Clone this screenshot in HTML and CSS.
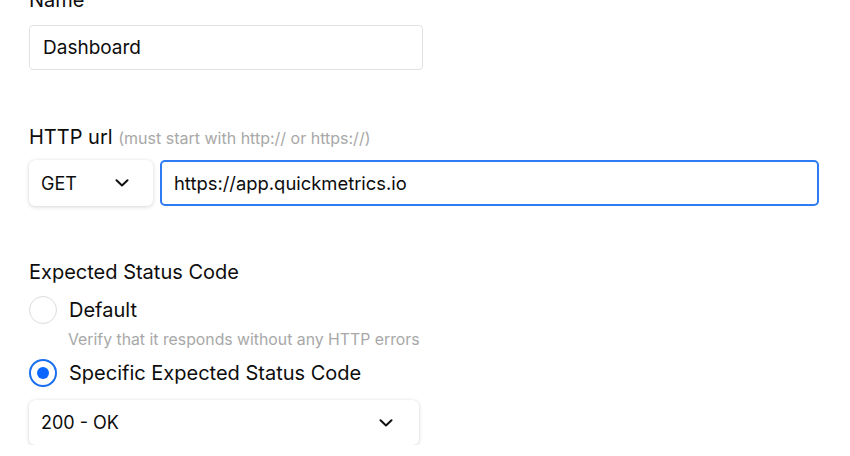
FILE: index.html
```html
<!DOCTYPE html>
<html>
<head>
<meta charset="utf-8">
<link rel="stylesheet" href="styles.css">
</head>
<body>
<div class="form">
  <div class="field">
    <label class="label">Name</label>
    <div class="input name-input">Dashboard</div>
  </div>

  <div class="field field-url">
    <label class="label">HTTP url <span class="hint">(must start with http:// or https://)</span></label>
    <div class="url-row">
      <div class="select method-select">
        <span>GET</span>
        <svg class="chev" width="14" height="8" viewBox="0 0 14 8"><path d="M1.5 1.2 L7 6.5 L12.5 1.2" fill="none" stroke="#111" stroke-width="2" stroke-linecap="round" stroke-linejoin="round"/></svg>
      </div>
      <div class="input url-input">https://app.quickmetrics.io</div>
    </div>
  </div>

  <div class="field field-status">
    <label class="label">Expected Status Code</label>
    <div class="radio-row">
      <span class="radio"></span>
      <span class="radio-text">Default</span>
    </div>
    <div class="radio-desc">Verify that it responds without any HTTP errors</div>
    <div class="radio-row radio-row-2">
      <span class="radio radio-on"></span>
      <span class="radio-text">Specific Expected Status Code</span>
    </div>
    <div class="select status-select">
      <span>200 - OK</span>
      <svg class="chev" width="14" height="8" viewBox="0 0 14 8"><path d="M1.5 1.2 L7 6.5 L12.5 1.2" fill="none" stroke="#111" stroke-width="2" stroke-linecap="round" stroke-linejoin="round"/></svg>
    </div>
  </div>
</div>
</body>
</html>
```

FILE: styles.css
```css
html, body {
  margin: 0;
  padding: 0;
  background: #ffffff;
}

body {
  font-family: Inter, "Liberation Sans", sans-serif;
  color: #0d0d0d;
  overflow: hidden;
}

.form {
  padding: 0 29px;
  margin-top: -12px;
  display: flex;
  flex-direction: column;
}

.field {
  display: flex;
  flex-direction: column;
}

.label {
  display: block;
  font-size: 20px;
  line-height: 24px;
  color: #0d0d0d;
}

.hint {
  font-size: 16px;
  color: #a8a8a8;
}

.input {
  box-sizing: border-box;
  height: 45px;
  display: flex;
  align-items: center;
  font-size: 19px;
  background: #fff;
  border-radius: 4px;
}

.name-input {
  margin-top: 13px;
  width: 394px;
  border: 1px solid #e2e2e2;
  padding-left: 13px;
}

.field-url {
  margin-top: 55px;
}

.url-row {
  display: flex;
  gap: 7px;
  margin-top: 10px;
  width: 790px;
}

.select {
  box-sizing: border-box;
  display: flex;
  align-items: center;
  justify-content: space-between;
  background: #fff;
  border-radius: 6px;
  box-shadow: 0 1px 4px rgba(0, 0, 0, 0.16), 0 0 1px rgba(0, 0, 0, 0.08);
  font-size: 18px;
  padding: 0 24px 0 12px;
}

.method-select {
  width: 124px;
  height: 46px;
}

.url-input {
  flex: 1;
  height: 46px;
  border: 2px solid #2d7cf4;
  border-radius: 5px;
  padding-left: 12px;
  font-size: 18.4px;
}

.chev {
  display: block;
}

.field-status {
  margin-top: 54px;
}

.radio-row {
  display: flex;
  align-items: center;
  gap: 12px;
  margin-top: 12px;
}

.radio-row-2 {
  margin-top: 9px;
}

.radio {
  box-sizing: border-box;
  width: 28px;
  height: 28px;
  border-radius: 50%;
  border: 1px solid #dcdcdc;
  background: #fff;
  display: flex;
  align-items: center;
  justify-content: center;
}

.radio-on {
  border: 2px solid #1a6ff0;
}

.radio-on::after {
  content: "";
  width: 12px;
  height: 12px;
  border-radius: 50%;
  background: #0a66ff;
}

.radio-text {
  font-size: 20px;
  line-height: 28px;
}

.radio-desc {
  margin-left: 39px;
  margin-top: 6px;
  font-size: 15.8px;
  line-height: 20px;
  color: #a8a8a8;
}

.status-select {
  margin-top: 13px;
  width: 390px;
  height: 45px;
  padding-right: 26px;
}
```
